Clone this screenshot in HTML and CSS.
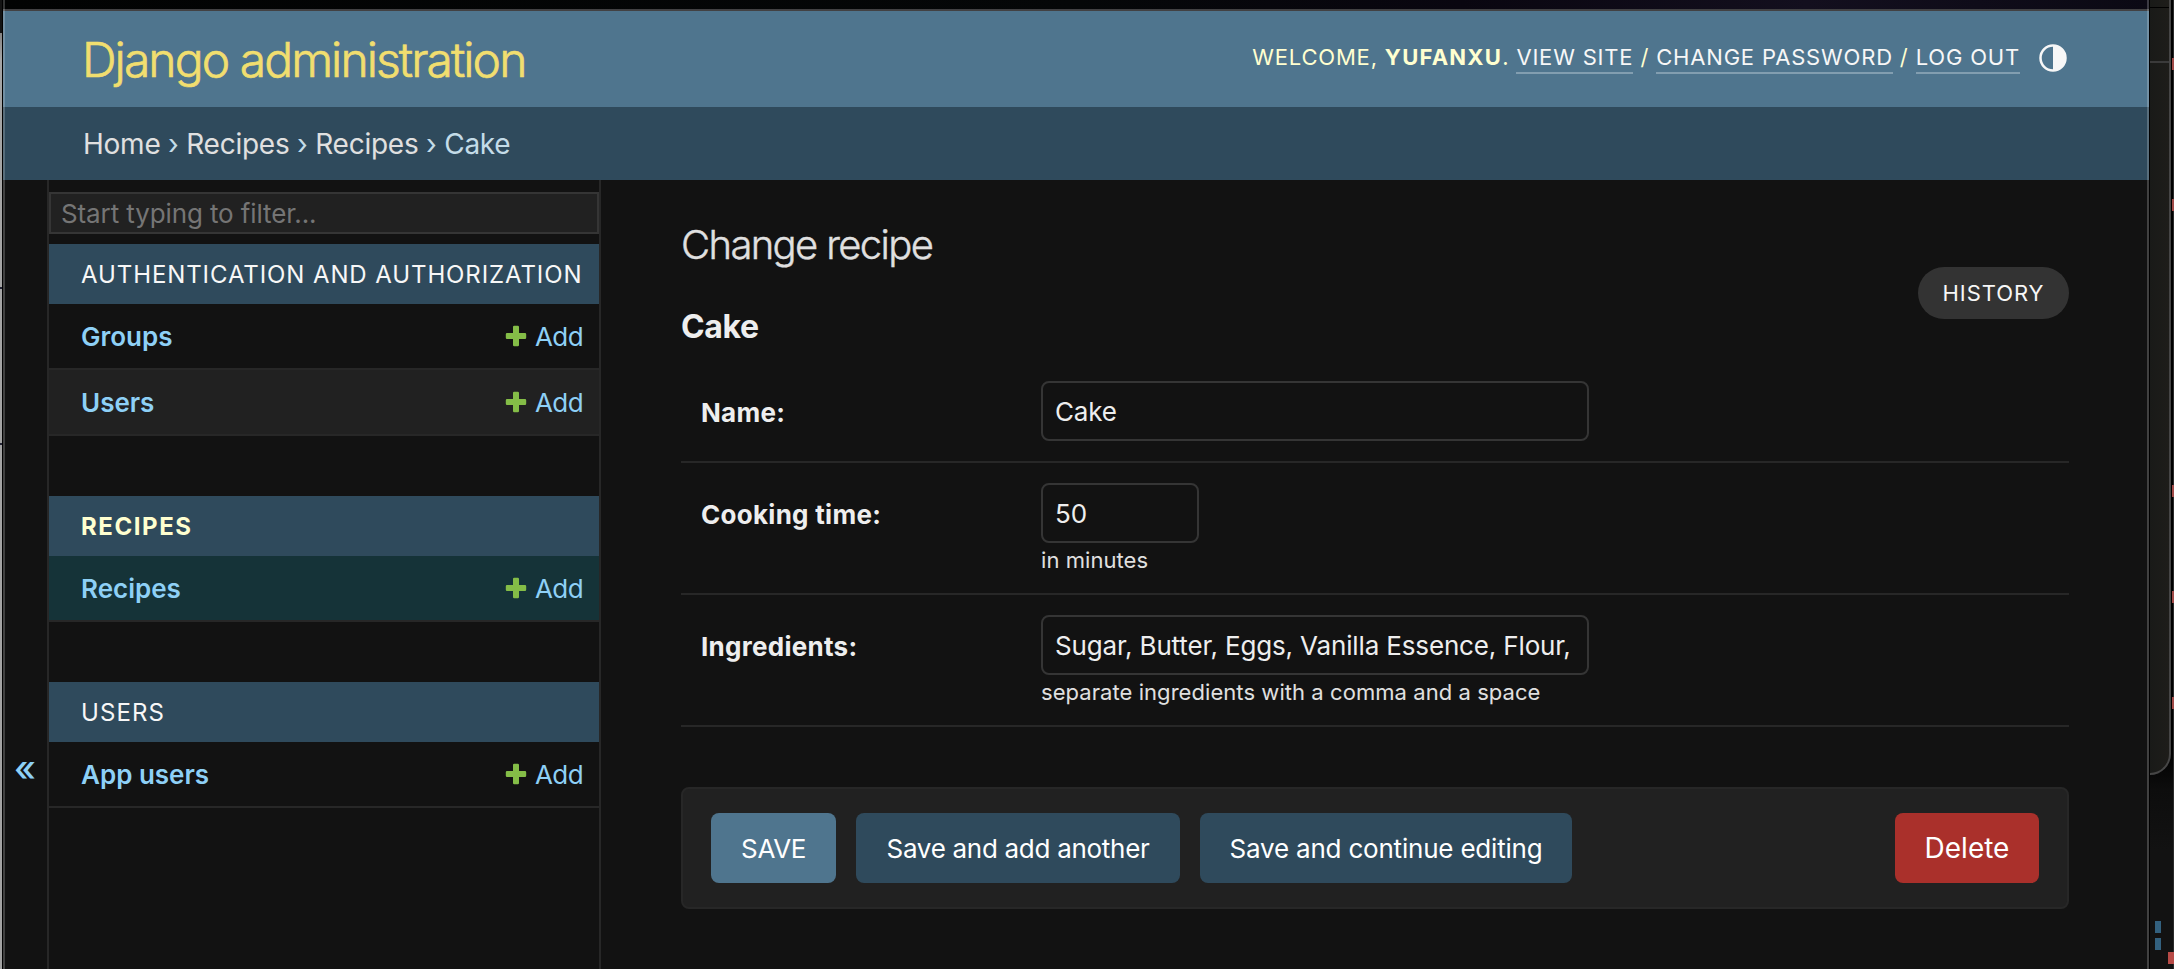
FILE: index.html
```html
<!DOCTYPE html>
<html lang="en">
<head>
<meta charset="utf-8">
<title>Cake | Change recipe | Django site admin</title>
<link rel="stylesheet" href="styles.css">
</head>
<body>
<svg width="0" height="0" class="defs" aria-hidden="true">
  <symbol id="plus" viewBox="0 0 22 22"><path fill="#84bd47" d="M9.2.8h3.6a1.2 1.2 0 0 1 1.2 1.2v6h6a1.2 1.2 0 0 1 1.200 1.200v3.600a1.200 1.200 0 0 1-1.200 1.200h-6v6a1.200 1.200 0 0 1-1.200 1.200H9.200a1.200 1.200 0 0 1-1.200-1.200v-6H2a1.200 1.200 0 0 1-1.200-1.200V9.200A1.200 1.200 0 0 1 2 8h6V2A1.200 1.200 0 0 1 9.200.8z"/></symbol>
</svg>
<div class="edge-left"><i class="tick tick-a"></i><i class="tick tick-b"></i></div>
<div class="window">
  <div class="sky"></div>
  <header class="header">
    <h1 class="site-name">Django administration</h1>
    <div class="user-tools">
      <span class="welcome">WELCOME, <strong>YUFANXU</strong>. <a>VIEW SITE</a> / <a>CHANGE PASSWORD</a> / <a>LOG OUT</a></span>
      <svg class="theme-icon" viewBox="0 0 28 28"><circle cx="14" cy="14" r="12.500" fill="none" stroke="#f7f7f7" stroke-width="2.500"/><path d="M14 1.500a12.500 12.500 0 0 1 0 25z" fill="#f7f7f7"/></svg>
    </div>
  </header>
  <nav class="breadcrumbs"><a>Home</a> › <a>Recipes</a> › <a>Recipes</a> › Cake</nav>
  <div class="main">
    <div class="toggle"><span>«</span></div>
    <aside class="sidebar">
      <input class="filter" placeholder="Start typing to filter...">
      <section class="module">
        <h2 class="caption">AUTHENTICATION AND AUTHORIZATION</h2>
        <div class="model"><a class="name">Groups</a><a class="add"><svg><use href="#plus"/></svg>Add</a></div>
        <div class="model alt"><a class="name">Users</a><a class="add"><svg><use href="#plus"/></svg>Add</a></div>
      </section>
      <section class="module">
        <h2 class="caption current">RECIPES</h2>
        <div class="model selected"><a class="name">Recipes</a><a class="add"><svg><use href="#plus"/></svg>Add</a></div>
      </section>
      <section class="module">
        <h2 class="caption users">USERS</h2>
        <div class="model"><a class="name">App users</a><a class="add"><svg><use href="#plus"/></svg>Add</a></div>
      </section>
    </aside>
    <main class="content">
      <div class="heading">
        <div>
          <h1 class="title">Change recipe</h1>
          <h2 class="object">Cake</h2>
        </div>
        <a class="history">HISTORY</a>
      </div>
      <div class="row"><label>Name:</label><div><input class="field" value="Cake"></div></div>
      <div class="row"><label>Cooking time:</label><div><input class="field short" value="50"><p class="help">in minutes</p></div></div>
      <div class="row"><label>Ingredients:</label><div><input class="field" value="Sugar, Butter, Eggs, Vanilla Essence, Flour,"><p class="help">separate ingredients with a comma and a space</p></div></div>
      <div class="submit-row">
        <button class="btn save">SAVE</button>
        <button class="btn another">Save and add another</button>
        <button class="btn continue">Save and continue editing</button>
        <button class="btn delete">Delete</button>
      </div>
    </main>
  </div>
</div>
<div class="edge-right">
  <div class="panel"><i></i></div>
  <i class="mark" style="top:58px"></i>
  <i class="mark" style="top:199px"></i>
  <i class="mark" style="top:485px"></i>
  <i class="mark" style="top:591px"></i>
  <i class="mark" style="top:697px"></i>
  <i class="mark blue" style="top:921px"></i>
  <i class="mark blue" style="top:938px"></i>
  <i class="mark wide" style="top:952px"></i>
</div>
</body>
</html>
```
FILE: styles.css
```css
* { box-sizing: border-box; }
body {
  margin: 0;
  height: 969px;
  overflow: hidden;
  display: grid;
  grid-template-columns: 3px 2146px 25px;
  background: #000;
  color: #eee;
  font: 26px/1 Inter, sans-serif;
}
h1, h2, p { margin: 0; }
.defs { position: absolute; }

.edge-left {
  position: relative;
  border-right: 1px solid #000;
  background: linear-gradient(#141414 33px, #858483 33px, #a5a5a5 60px, #a3a3a3);
}
.tick { position: absolute; left: 0; width: 2px; height: 2px; background: #223; }
.tick-a { top: 287px; }
.tick-b { top: 443px; }

.window {
  position: relative;
  height: 969px;
  display: flex;
  flex-direction: column;
  background: #121212;
}
.window::after {
  content: "";
  position: absolute;
  inset: 0;
  border: solid rgba(255, 255, 255, .2);
  border-width: 0 2px;
}
.sky {
  height: 11px;
  background: linear-gradient(90deg, #020303, #050708 50%, #090610 68%, #130f1e 84%, #0b0914);
  border-bottom: 2px solid #424143;
}
.header {
  height: 96px;
  padding: 0 82px 0 79px;
  display: flex;
  justify-content: space-between;
  background: #4f758e;
}
.site-name {
  color: #f1de6f;
  font-size: 48px;
  font-weight: 300;
  line-height: 98px;
  letter-spacing: -1.93px;
  -webkit-text-stroke: .7px #f1de6f;
}
.user-tools {
  height: 92px;
  display: flex;
  align-items: center;
  gap: 19px;
  color: #ffffd0;
  font-size: 22px;
  letter-spacing: .82px;
}
.welcome { white-space: nowrap; }
.welcome strong { letter-spacing: 1.25px; }
.welcome a {
  color: #f7f7f7;
  padding-bottom: 2px;
  border-bottom: 2px solid #829eb0;
}
.theme-icon { width: 28px; height: 28px; margin-top: 2px; }

.breadcrumbs {
  height: 73px;
  padding-left: 80px;
  background: #2f4a5c;
  color: #c4dce8;
  font-size: 28px;
  line-height: 75px;
  letter-spacing: -.25px;
}
.breadcrumbs a { color: #e0e0e0; }

.main { flex: 1; display: flex; }
.toggle { width: 44px; position: relative; }
.toggle span {
  position: absolute;
  top: 570px;
  left: 11px;
  color: #8ed0f6;
  font-size: 36px;
  font-weight: 500;
  line-height: 36px;
}
.sidebar {
  width: 554px;
  padding-top: 12px;
  border: solid #272727;
  border-width: 0 2px;
}
.filter {
  display: block;
  width: 550px;
  height: 42px;
  margin-bottom: 10px;
  padding: 0 10px;
  border: 2px solid #353535;
  background: #212121;
  color: #eee;
  font: 26px Inter, sans-serif;
  letter-spacing: -.11px;
}
.filter::placeholder { color: #757575; }
.module { margin-bottom: 60px; }
.caption {
  height: 60px;
  padding-left: 32px;
  background: #2f4a5c;
  color: #f7f7f7;
  font-size: 24px;
  font-weight: 400;
  line-height: 62px;
  letter-spacing: .9px;
  white-space: nowrap;
}
.caption.current { color: #ffffd0; font-weight: 700; letter-spacing: 1.55px; }
.caption.users { letter-spacing: 1.1px; }
.model {
  height: 66px;
  padding: 0 16px 0 32px;
  display: flex;
  justify-content: space-between;
  border-bottom: 2px solid #272727;
  color: #8ed0f6;
  line-height: 66px;
}
.alt { background: #212121; }
.selected { background: #153338; }
.name { font-weight: 600; }
.add { display: flex; gap: 8px; letter-spacing: -.6px; }
.add svg { width: 22px; height: 22px; margin-top: 21px; }

.content { width: 1388px; margin-left: 80px; padding-top: 41px; }
.heading { display: flex; justify-content: space-between; height: 140px; }
.title {
  color: #e0e0e0;
  font-size: 40px;
  font-weight: 300;
  line-height: 48px;
  letter-spacing: -1.64px;
  -webkit-text-stroke: .4px #e0e0e0;
}
.object {
  margin-top: 38px;
  font-size: 32px;
  font-weight: 700;
  line-height: 40px;
  letter-spacing: -.36px;
}
.history {
  width: 151px;
  height: 52px;
  margin-top: 46px;
  border-radius: 26px;
  background: #333;
  color: #f7f7f7;
  font-size: 22px;
  line-height: 52px;
  text-align: center;
  letter-spacing: .94px;
}
.row {
  display: flex;
  padding: 20px 0 20px 20px;
  border-bottom: 2px solid #272727;
}
.row label { width: 340px; height: 60px; font-weight: 700; line-height: 63px; letter-spacing: .28px; }
.field {
  display: block;
  width: 548px;
  height: 60px;
  padding: 0 12px;
  border: 2px solid #353535;
  border-radius: 8px;
  background: #121212;
  color: #eee;
  font: 26px Inter, sans-serif;
  letter-spacing: -.15px;
}
.short { width: 158px; }
.help {
  padding-top: 4px;
  color: #e0e0e0;
  font-size: 22px;
  line-height: 26px;
  letter-spacing: .06px;
}
.submit-row {
  height: 122px;
  margin-top: 60px;
  padding: 24px 28px;
  display: flex;
  gap: 20px;
  border: 2px solid #272727;
  border-radius: 8px;
  background: #212121;
}
.btn {
  height: 70px;
  padding: 0;
  border: 0;
  border-radius: 8px;
  background: #2f4a5c;
  color: #fff;
  font: 26px Inter, sans-serif;
  letter-spacing: -.2px;
}
.save { width: 125px; background: #4f758e; letter-spacing: -.4px; }
.another { width: 324px; letter-spacing: -.29px; }
.continue { width: 372px; }
.delete { width: 144px; margin-left: auto; background: #aa302b; font-size: 28px; letter-spacing: 0; }

.edge-right {
  position: relative;
  border-left: 1px solid #000;
  background: linear-gradient(90deg, transparent 23px, #2a2a2a 23px), linear-gradient(#000 750px, #0d0d0d 790px, #121212 850px);
}
.panel {
  width: 21px;
  height: 775px;
  padding-top: 7px;
  border: solid #464646;
  border-width: 0 2px 2px 0;
  border-radius: 0 0 21px 0;
  background: linear-gradient(90deg, #191a18, #1e1d1a);
}
.panel i {
  display: block;
  height: 56px;
  border-top: 1px solid #000;
  border-bottom: 2px solid #3a3a3a;
}
.mark { position: absolute; right: 0; width: 2px; height: 12px; background: #a04a47; }
.mark.blue { right: 13px; width: 6px; background: #33617f; }
.mark.wide { width: 6px; background: #b84b47; }
```
